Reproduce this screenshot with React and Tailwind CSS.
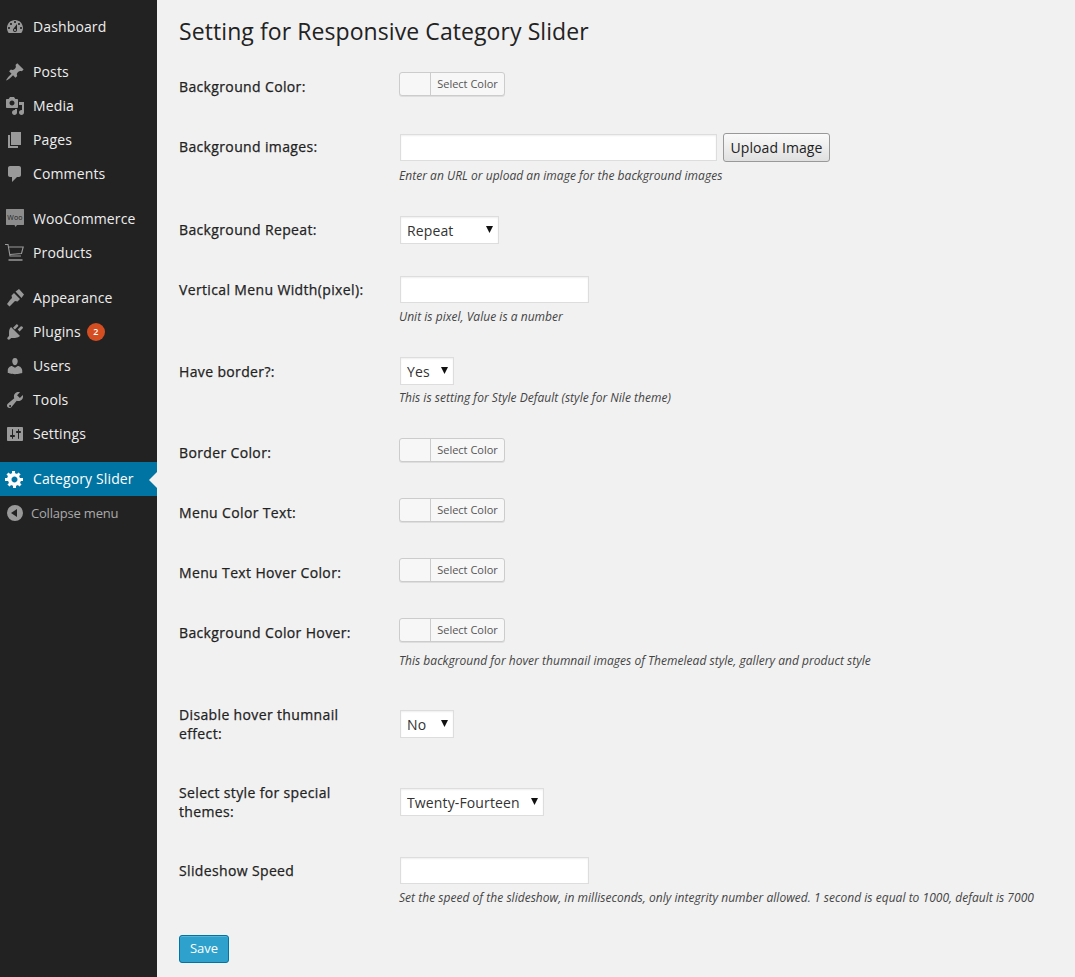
const icons = {
  dashboard: "M3.76 16h12.48c1.1-1.37 1.76-3.11 1.76-5 0-4.42-3.58-8-8-8s-8 3.58-8 8c0 1.89.66 3.63 1.76 5zM10 4c.55 0 1 .45 1 1s-.45 1-1 1-1-.45-1-1 .45-1 1-1zM6 6c.55 0 1 .45 1 1s-.45 1-1 1-1-.45-1-1 .45-1 1-1zm8 0c.55 0 1 .45 1 1s-.45 1-1 1-1-.45-1-1 .45-1 1-1zm-5.37 5.55L12 7v6c0 1.1-.9 2-2 2s-2-.9-2-2c0-.57.24-1.08.63-1.45zM4 10c.55 0 1 .45 1 1s-.45 1-1 1-1-.45-1-1 .45-1 1-1zm12 0c.55 0 1 .45 1 1s-.45 1-1 1-1-.45-1-1 .45-1 1-1zm-5 3c0-.55-.45-1-1-1s-1 .45-1 1 .45 1 1 1 1-.45 1-1z",
  posts: "M10.44 3.02l1.82-1.82 6.36 6.35-1.83 1.82c-1.05-.68-2.48-.57-3.41.36l-.75.75c-.92.93-1.04 2.35-.35 3.41l-1.83 1.82-2.41-2.41-2.8 2.79c-.42.42-3.38 2.71-3.8 2.29s1.86-3.39 2.28-3.81l2.79-2.79L4.1 9.36l1.83-1.82c1.05.69 2.48.57 3.4-.36l.75-.75c.93-.92 1.05-2.35.36-3.41z",
  media: "M13 11V4c0-.55-.45-1-1-1h-1.67L9 1H5L3.67 3H2c-.55 0-1 .45-1 1v7c0 .55.45 1 1 1h10c.55 0 1-.45 1-1zM7 4.5c1.38 0 2.5 1.12 2.5 2.5S8.38 9.5 7 9.5 4.5 8.38 4.5 7 5.62 4.5 7 4.5zM14 6h5v10.5c0 1.38-1.12 2.5-2.5 2.5S14 17.88 14 16.5s1.12-2.5 2.5-2.5c.17 0 .34.02.5.05V9h-3V6zm-4 8.05V13h2v3.5c0 1.38-1.12 2.5-2.5 2.5S7 17.88 7 16.5 8.12 14 9.5 14c.17 0 .34.02.5.05z",
  pages: "M6 15V2h10v13H6zm-1 1h8v2H3V5h2v11z",
  comments: "M5 2h9c1.1 0 2 .9 2 2v7c0 1.1-.9 2-2 2h-2l-5 5v-5H5c-1.1 0-2-.9-2-2V4c0-1.1.9-2 2-2z",
  appearance: "M10.500 3.500L14 1l5 5.500-2.500 3.500zM9 5l6 6-2.500 2.500-2.500-.5-2 2-3.500 3.500-2.500-2.500L5 12l2-2-.5-2.500z",
  plugins: "M13.11 4.36L9.87 7.6 8 5.73l3.24-3.24c.35-.34 1.05-.2 1.56.32.52.51.66 1.21.31 1.55zm-8 1.77l.91-1.12 9.01 9.01-1.19.84c-.71.71-2.63 1.16-3.82 1.16H6.14L4.9 17.26c-.59.59-1.54.59-2.12 0-.59-.58-.59-1.53 0-2.12l1.24-1.24v-3.88c0-1.13.4-3.19 1.09-3.89zm7.56 1.48l3.24-3.24c.35-.34 1.05-.2 1.56.32.52.51.66 1.21.31 1.55l-3.24 3.25z",
  users: "M10 9.25c-2.27 0-2.73-3.44-2.73-3.44C7 4.02 7.82 2 9.97 2c2.16 0 2.98 2.02 2.71 3.81 0 0-.41 3.44-2.68 3.44zm0 2.57L12.72 10c2.39 0 4.52 2.33 4.52 4.53v2.49s-3.65 1.13-7.24 1.13c-3.65 0-7.24-1.13-7.24-1.13v-2.49c0-2.25 1.94-4.48 4.15-4.48z",
  tools: "M16.68 9.77c-1.34 1.34-3.3 1.67-4.95.99l-5.41 6.52c-.99.99-2.59.99-3.58 0s-.99-2.59 0-3.57l6.52-5.42c-.68-1.65-.35-3.61.99-4.95 1.28-1.28 3.12-1.62 4.72-1.06l-2.89 2.89 2.82 2.82 2.89-2.89c.56 1.6.22 3.44-1.06 4.72zM4.39 16.68c.39.39 1.03.39 1.42 0 .39-.39.39-1.02 0-1.41-.39-.39-1.03-.39-1.42 0-.39.39-.39 1.02 0 1.41z",
  settings: "M18 16V4c0-.55-.45-1-1-1H3c-.55 0-1 .45-1 1v12c0 .55.45 1 1 1h14c.55 0 1-.45 1-1zM8 11h1c.55 0 1 .45 1 1s-.45 1-1 1H8v1.5c0 .28-.22.5-.5.5s-.5-.22-.5-.5V13H6c-.55 0-1-.45-1-1s.45-1 1-1h1V5.5c0-.28.22-.5.5-.5s.5.22.5.5V11zm5-2h-1c-.55 0-1-.45-1-1s.45-1 1-1h1V5.5c0-.28.22-.5.5-.5s.5.22.5.5V7h1c.55 0 1 .45 1 1s-.45 1-1 1h-1v5.5c0 .28-.22.5-.5.5s-.5-.22-.5-.5V9z",
  gear: "M18 12h-2.18c-.17.7-.44 1.35-.81 1.93l1.54 1.54-2.1 2.1-1.54-1.54c-.58.36-1.23.64-1.91.81V19H8v-2.18c-.68-.17-1.33-.45-1.91-.81l-1.54 1.54-2.12-2.12 1.54-1.54c-.36-.58-.64-1.23-.81-1.91H0V9h2.18c.17-.7.45-1.35.82-1.94L1.46 5.52l2.12-2.12 1.54 1.54c.58-.37 1.23-.64 1.93-.81V2h3v2.18c.68.17 1.33.44 1.91.81l1.54-1.54 2.12 2.12-1.54 1.54c.36.59.64 1.24.81 1.94H18V12zm-8.5 1.5c1.66 0 3-1.34 3-3s-1.34-3-3-3-3 1.34-3 3 1.34 3 3 3z",
  collapse: "M10 2a8 8 0 1 0 0 16a8 8 0 0 0 0-16zm2 4v8l-6-4z",
};

function Icon({ name, active }) {
  return (
    <svg viewBox="0 0 20 20" className={`w-5 h-5 ${active ? "text-white" : "text-[#999]"}`} fill="currentColor">
      <path d={icons[name]} fillRule="evenodd" />
    </svg>
  );
}

function WooIcon() {
  return (
    <svg viewBox="0 0 20 20" className="w-5 h-5">
      <path d="M1.500 0h17c.3 0 .5.2.5.5v15c0 .3-.2.5-.5.5H12l-1.500 2-1-2H1.500c-.3 0-.5-.2-.5-.5V.5c0-.3.2-.5.5-.5z" fill="#8c8c8c" />
      <text x="10" y="10.500" textAnchor="middle" fontSize="7" fill="#222" fontFamily="Open Sans, sans-serif">Woo</text>
    </svg>
  );
}

function CartIcon() {
  return (
    <svg viewBox="0 0 20 20" className="w-5 h-5" fill="none" stroke="#999" strokeWidth="1.100">
      <path d="M0 1.500h3l2 11.500h11" />
      <path d="M3.700 4h14.500l-1.700 6.500-11.600 1" />
      <path d="M3.500 17h14" strokeWidth="1.500" />
    </svg>
  );
}

const menu = [
  { label: "Dashboard", icon: "dashboard", gap: true },
  { label: "Posts", icon: "posts" },
  { label: "Media", icon: "media" },
  { label: "Pages", icon: "pages" },
  { label: "Comments", icon: "comments", gap: true },
  { label: "WooCommerce", icon: "woo" },
  { label: "Products", icon: "cart", gap: true },
  { label: "Appearance", icon: "appearance" },
  { label: "Plugins", icon: "plugins", badge: "2" },
  { label: "Users", icon: "users" },
  { label: "Tools", icon: "tools" },
  { label: "Settings", icon: "settings", gap: true },
];

function MenuItem({ item }) {
  return (
    <div className={`flex items-center h-[34px] pl-[5px] text-[14px] tracking-[0.13px] text-[#eee] ${item.gap ? "mb-[11px]" : ""}`}>
      {item.icon === "woo" ? <WooIcon /> : item.icon === "cart" ? <CartIcon /> : <Icon name={item.icon} />}
      <span className="ml-2 mb-[2px]">{item.label}</span>
      {item.badge && (
        <span className="ml-[6px] w-[18px] h-[18px] rounded-full bg-[#d54e21] text-white text-[9px] font-semibold flex items-center justify-center">
          {item.badge}
        </span>
      )}
    </div>
  );
}

function ColorPicker() {
  return (
    <div className="-ml-px flex w-[106px] h-[24px] border border-[#ccc] rounded-[3px] bg-[#f7f7f7] shadow-[0_1px_0_rgba(0,0,0,0.08)]">
      <div className="w-[31px] border-r border-[#ccc]" />
      <div className="flex-1 text-center text-[11px] leading-[22px] text-[#555]">Select Color</div>
    </div>
  );
}

function TextInput({ width }) {
  return <input type="text" className={`${width} h-[27px] bg-white border border-[#ddd] shadow-[inset_0_1px_2px_rgba(0,0,0,0.07)] outline-none`} />;
}

function Select({ value, width }) {
  return (
    <div className={`relative ${width} h-[28px]`}>
      <select className="appearance-none w-full h-full bg-white border border-[#ddd] shadow-[inset_0_1px_2px_rgba(0,0,0,0.07)] pl-[6px] text-[14px] tracking-[0.13px] text-[#333] outline-none rounded-none" defaultValue={value}>
        <option>{value}</option>
      </select>
      <svg viewBox="0 0 8 7" className="absolute right-[5px] top-[10px] w-2 h-[7px] pointer-events-none">
        <path d="M0 0h7L3.500 7z" fill="#111" />
      </svg>
    </div>
  );
}

function Hint({ children, mt }) {
  return <p className={`${mt} -ml-px text-[12px] leading-[16px] italic tracking-[0.03px] text-[#444] whitespace-nowrap`}>{children}</p>;
}

const rows = [
  { label: "Background Color:", h: "h-[62px]", pt: "pt-[20px]", control: <ColorPicker /> },
  {
    label: "Background images:", h: "h-[82px]", pt: "pt-[18px]",
    control: (
      <>
        <div className="-mt-px flex items-center gap-[6px]">
          <TextInput width="w-[317px]" />
          <button className="w-[107px] h-[29px] border border-[#999] rounded-[3px] bg-gradient-to-b from-[#fafafa] to-[#e0e0e0] text-[14px] tracking-[0.1px] text-[#222]">Upload Image</button>
        </div>
        <Hint mt="mt-[6px]">Enter an URL or upload an image for the background images</Hint>
      </>
    ),
  },
  { label: "Background Repeat:", h: "h-[60px]", pt: "pt-[19px]", control: <Select value="Repeat" width="w-[99px]" /> },
  {
    label: "Vertical Menu Width(pixel):", h: "h-[81px]", pt: "pt-[19px]",
    control: (
      <>
        <TextInput width="w-[189px]" />
        <Hint mt="mt-[6px]">Unit is pixel, Value is a number</Hint>
      </>
    ),
  },
  {
    label: "Have border?:", h: "h-[81px]", pt: "pt-[20px]",
    control: (
      <>
        <Select value="Yes" width="w-[54px]" />
        <Hint mt="mt-[5px]">This is setting for Style Default (style for Nile theme)</Hint>
      </>
    ),
  },
  { label: "Border Color:", h: "h-[60px]", pt: "pt-[20px]", control: <ColorPicker /> },
  { label: "Menu Color Text:", h: "h-[60px]", pt: "pt-[20px]", control: <ColorPicker /> },
  { label: "Menu Text Hover Color:", h: "h-[60px]", pt: "pt-[20px]", control: <ColorPicker /> },
  {
    label: "Background Color Hover:", h: "h-[92px]", pt: "pt-[20px]",
    control: (
      <>
        <ColorPicker />
        <Hint mt="mt-[11px]">This background for hover thumnail images of Themelead style, gallery and product style</Hint>
      </>
    ),
  },
  { label: "Disable hover thumnail effect:", h: "h-[78px]", pt: "pt-[10px]", control: <Select value="No" width="w-[54px]" /> },
  { label: "Select style for special themes:", h: "h-[69px]", pt: "pt-[10px]", control: <Select value="Twenty-Fourteen" width="w-[144px]" /> },
  {
    label: "Slideshow Speed", h: "h-[93px]", pt: "pt-[19px]",
    control: (
      <>
        <TextInput width="w-[189px]" />
        <Hint mt="mt-[6px]">Set the speed of the slideshow, in milliseconds, only integrity number allowed. 1 second is equal to 1000, default is 7000</Hint>
      </>
    ),
  },
];

export default function App() {
  return (
    <div className="flex min-h-[977px] bg-[#f1f1f1] font-['Open_Sans',sans-serif] text-[#222]">
      <aside className="w-[157px] shrink-0 bg-[#222] pt-[10px]">
        {menu.map(item => <MenuItem key={item.label} item={item} />)}
        <div className="relative flex items-center h-[34px] pl-[5px] bg-[#0074a2] text-[14px] tracking-[0.13px] text-white">
          <Icon name="gear" active />
          <span className="ml-2 mb-[2px]">Category Slider</span>
          <span className="absolute right-0 top-[10px] border-y-[8px] border-y-transparent border-r-[8px] border-r-[#f1f1f1]" />
        </div>
        <div className="flex items-center h-[34px] pl-[5px] text-[13px] tracking-[-0.2px] text-[#aaa]">
          <Icon name="collapse" />
          <span className="ml-[6px] mt-[2px]">Collapse menu</span>
        </div>
      </aside>

      <main className="flex-1 pl-[22px]">
        <h1 className="pt-[16px] h-[57px] text-[23px] leading-[31px] tracking-[0.08px] text-[#222]">Setting for Responsive Category Slider</h1>
        {rows.map(row => (
          <div key={row.label} className={`flex ${row.h}`}>
            <div className={`w-[221px] shrink-0 pr-[20px] text-[14px] leading-[19px] tracking-[0.36px] [-webkit-text-stroke:0.25px_#222] text-[#222] ${row.pt}`}>{row.label}</div>
            <div className="pt-[15px]">{row.control}</div>
          </div>
        ))}
        <button className="w-[50px] h-[28px] bg-[#2ea2cc] border border-[#0074a2] rounded-[3px] text-[13px] text-white shadow-[inset_0_1px_0_rgba(120,200,230,0.5)]">Save</button>
      </main>
    </div>
  );
}
